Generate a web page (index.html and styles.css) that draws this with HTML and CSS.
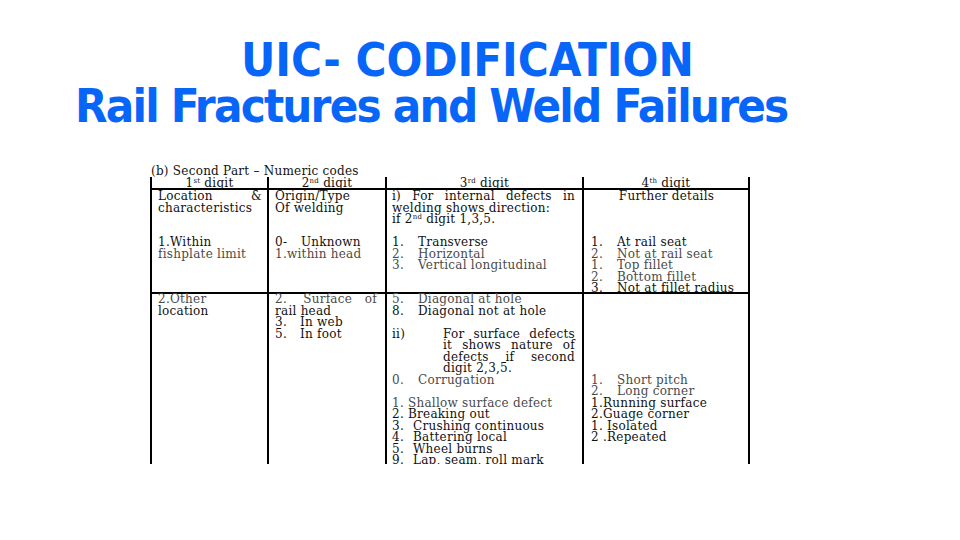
FILE: index.html
```html
<!DOCTYPE html>
<html>
<head>
<meta charset="utf-8">
<link rel="stylesheet" href="styles.css">
</head>
<body>
<div class="slide">
  <h1 class="title">
    <span class="t1">UIC- CODIFICATION</span>
    <span class="t2">Rail Fractures and Weld Failures</span>
  </h1>
  <div class="doc">
    <div class="caption">(b) Second Part – Numeric codes</div>
    <div class="codes">
      <div class="cell head">1<sup>st</sup> digit</div>
      <div class="cell head">2<sup>nd</sup> digit</div>
      <div class="cell head">3<sup>rd</sup> digit</div>
      <div class="cell head last">4<sup>th</sup> digit</div>

      <div class="cell r1 c1">
        <div class="ln sp"><span>Location</span><span>&amp;</span></div>
        <div class="ln">characteristics</div>
        <div class="ln"></div>
        <div class="ln"></div>
        <div class="ln">1.Within</div>
        <div class="ln dim">fishplate limit</div>
      </div>
      <div class="cell r1 c2">
        <div class="ln">Origin/Type</div>
        <div class="ln">Of welding</div>
        <div class="ln"></div>
        <div class="ln"></div>
        <div class="ln"><span class="n">0-</span>Unknown</div>
        <div class="ln dim">1.within head</div>
      </div>
      <div class="cell r1 c3">
        <div class="ln sp"><span>i)</span><span>For</span><span>internal</span><span>defects</span><span>in</span></div>
        <div class="ln">welding shows direction:</div>
        <div class="ln">if 2<sup>nd</sup> digit 1,3,5.</div>
        <div class="ln"></div>
        <div class="ln"><span class="n">1.</span>Transverse</div>
        <div class="ln dim"><span class="n">2.</span>Horizontal</div>
        <div class="ln dim"><span class="n">3.</span>Vertical longitudinal</div>
      </div>
      <div class="cell r1 c4 last">
        <div class="ln center">Further details</div>
        <div class="ln"></div>
        <div class="ln"></div>
        <div class="ln"></div>
        <div class="ln"><span class="n">1.</span>At rail seat</div>
        <div class="ln dim"><span class="n">2.</span>Not at rail seat</div>
        <div class="ln dim"><span class="n">1.</span>Top fillet</div>
        <div class="ln dim"><span class="n">2.</span>Bottom fillet</div>
        <div class="ln"><span class="n">3.</span>Not at fillet radius</div>
      </div>

      <div class="cell r2 c1">
        <div class="ln dim">2.Other</div>
        <div class="ln">location</div>
      </div>
      <div class="cell r2 c2">
        <div class="ln sp dim"><span>2.&nbsp;&nbsp;&nbsp;&nbsp;Surface</span><span>of</span></div>
        <div class="ln">rail head</div>
        <div class="ln"><span class="n2">3.</span>In web</div>
        <div class="ln"><span class="n2">5.</span>In foot</div>
      </div>
      <div class="cell r2 c3">
        <div class="ln dim"><span class="n">5.</span>Diagonal at hole</div>
        <div class="ln"><span class="n">8.</span>Diagonal not at hole</div>
        <div class="ln"></div>
        <div class="hang">
          <div class="ln">ii)</div>
          <div class="hang-body">
            <div class="ln sp"><span>For</span><span>surface</span><span>defects</span></div>
            <div class="ln sp"><span>it</span><span>shows</span><span>nature</span><span>of</span></div>
            <div class="ln sp"><span>defects</span><span>if</span><span>second</span></div>
            <div class="ln">digit 2,3,5.</div>
          </div>
        </div>
        <div class="ln dim"><span class="n">0.</span>Corrugation</div>
        <div class="ln"></div>
        <div class="ln dim">1. Shallow surface defect</div>
        <div class="ln">2. Breaking out</div>
        <div class="ln"><span class="n3">3.</span>Crushing continuous</div>
        <div class="ln"><span class="n3">4.</span>Battering local</div>
        <div class="ln"><span class="n3">5.</span>Wheel burns</div>
        <div class="ln"><span class="n3">9.</span>Lap, seam, roll mark</div>
      </div>
      <div class="cell r2 c4 last">
        <div class="ln"></div>
        <div class="ln"></div>
        <div class="ln"></div>
        <div class="ln"></div>
        <div class="ln"></div>
        <div class="ln"></div>
        <div class="ln"></div>
        <div class="ln dim"><span class="n">1.</span>Short pitch</div>
        <div class="ln dim"><span class="n">2.</span>Long corner</div>
        <div class="ln">1.Running surface</div>
        <div class="ln">2.Guage corner</div>
        <div class="ln">1. Isolated</div>
        <div class="ln">2 .Repeated</div>
      </div>
    </div>
  </div>
</div>
</body>
</html>
```

FILE: styles.css
```css
html, body {
  margin: 0;
  padding: 0;
  background: #ffffff;
}

.slide {
  width: 960px;
  height: 540px;
  overflow: hidden;
  position: relative;
}

.title {
  margin: 0;
  padding-top: 37px;
  font-family: "DejaVu Sans Condensed", "DejaVu Sans", sans-serif;
  font-weight: bold;
  font-size: 47px;
  line-height: 46px;
  color: #0766f8;
}

.t1, .t2 {
  display: block;
  white-space: nowrap;
}

.t1 {
  padding-left: 241px;
  letter-spacing: 0px;
}

.t2 {
  padding-left: 75px;
  letter-spacing: -1.8px;
}

.doc {
  margin-top: 36px;
  margin-left: 150px;
  width: 600px;
  font-family: "DejaVu Serif", "Liberation Serif", serif;
  font-size: 12px;
  letter-spacing: 0.25px;
  color: #111;
}

.caption {
  padding-left: 1px;
  padding-top: 1px;
  height: 11px;
  line-height: 11.5px;
  white-space: nowrap;
}

.codes {
  display: grid;
  grid-template-columns: 117px 118px 197px 168px;
  grid-template-rows: 13px 104px 1fr;
  height: 287px;
  overflow: hidden;
}

.cell {
  border-left: 2px solid #000;
  line-height: 11.5px;
}

.cell.last {
  border-right: 2px solid #000;
}

.head {
  text-align: center;
  border-bottom: 2px solid #000;
  line-height: 12px;
  white-space: nowrap;
}

.r1 {
  border-bottom: 2px solid #000;
  padding-top: 1px !important;
}

.r2 {
  margin-top: -1px;
  padding-top: 1px !important;
}

sup {
  font-size: 7px;
  line-height: 0;
  vertical-align: 4px;
}

.c1 { padding: 0 5px 0 6px; }
.c2 { padding: 0 8px 0 6px; }
.c3 { padding: 0 7px 0 5px; }
.c4 { padding: 0 6px 0 7px; }

.ln {
  height: 11.5px;
  line-height: 11.5px;
  white-space: nowrap;
}

.sp {
  display: flex;
  justify-content: space-between;
}

.center {
  text-align: center;
}

.dim {
  color: #4a4a4a;
}

.n {
  display: inline-block;
  width: 26px;
}

.n2 {
  display: inline-block;
  width: 25px;
}

.n3 {
  display: inline-block;
  width: 21px;
}

.hang {
  display: grid;
  grid-template-columns: 51px 1fr;
}
```
